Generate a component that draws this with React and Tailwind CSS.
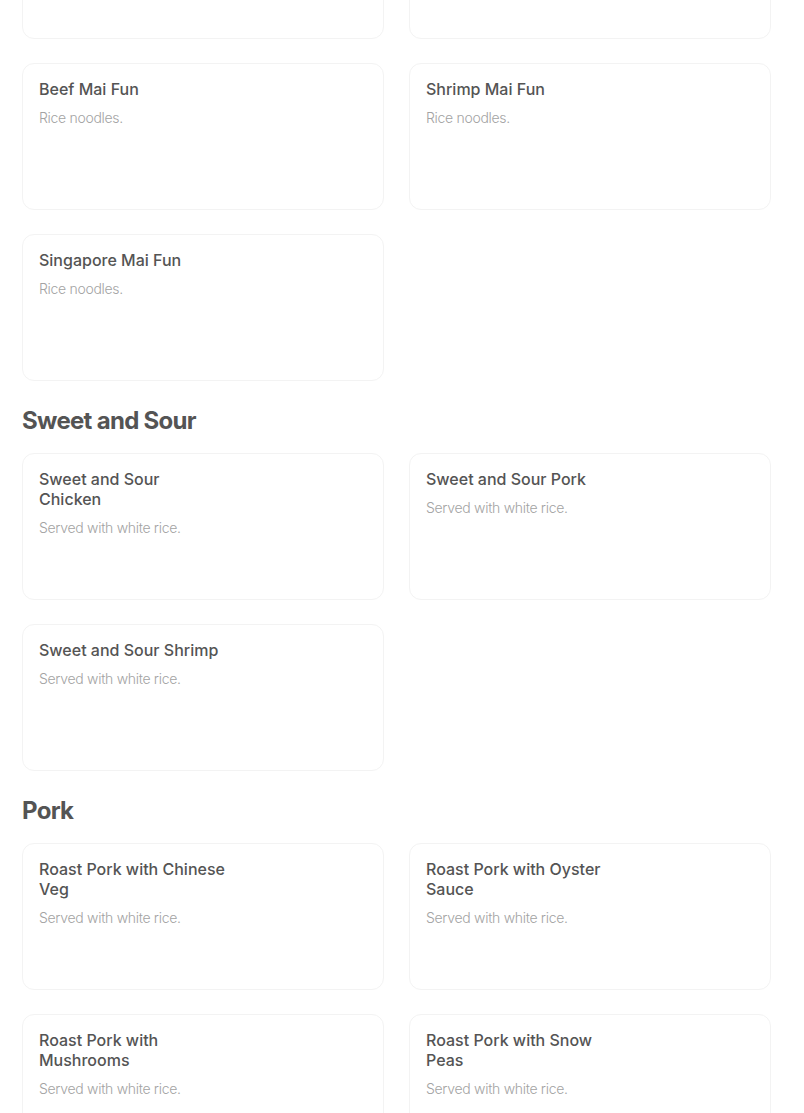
const font = { fontFamily: 'Inter, "Noto Sans", sans-serif' };

function Card({ title, desc }) {
  return (
    <div className="h-[147px] rounded-[12px] border border-[#f3f3f3] bg-white px-4 pt-[15px]">
      {title ? (
        <>
          <div className="max-w-[186px] text-[16px] font-medium leading-[20px] text-[#545454]">{title}</div>
          <div className="mt-[9px] text-[14px] font-light leading-[20px] tracking-[-0.3px] text-[#a3a3a3]">{desc}</div>
        </>
      ) : null}
    </div>
  );
}

function Grid({ items, className = "" }) {
  return (
    <div className={"grid grid-cols-2 gap-x-[25px] gap-y-[24px] " + className}>
      {items.map((it, i) => (
        <Card key={i} title={it[0]} desc={it[1]} />
      ))}
    </div>
  );
}

function Section({ title, items }) {
  return (
    <div className="mt-[24px]">
      <h2 className="mb-[16px] h-[32px] text-[24px] font-bold leading-[32px] tracking-[-0.7px] text-[#545454]">{title}</h2>
      <Grid items={items} />
    </div>
  );
}

export default function App() {
  const rice = "Served with white rice.";
  return (
    <div className="w-[804px] overflow-hidden bg-white" style={font}>
      <div className="h-[1113px] w-[749px] ml-[22px] overflow-hidden">
        <Grid
          className="-mt-[108px]"
          items={[
            ["", ""],
            ["", ""],
            ["Beef Mai Fun", "Rice noodles."],
            ["Shrimp Mai Fun", "Rice noodles."],
            ["Singapore Mai Fun", "Rice noodles."],
          ]}
        />
        <Section
          title="Sweet and Sour"
          items={[
            ["Sweet and Sour Chicken", rice],
            ["Sweet and Sour Pork", rice],
            ["Sweet and Sour Shrimp", rice],
          ]}
        />
        <Section
          title="Pork"
          items={[
            ["Roast Pork with Chinese Veg", rice],
            ["Roast Pork with Oyster Sauce", rice],
            ["Roast Pork with Mushrooms", rice],
            ["Roast Pork with Snow Peas", rice],
          ]}
        />
      </div>
    </div>
  );
}
